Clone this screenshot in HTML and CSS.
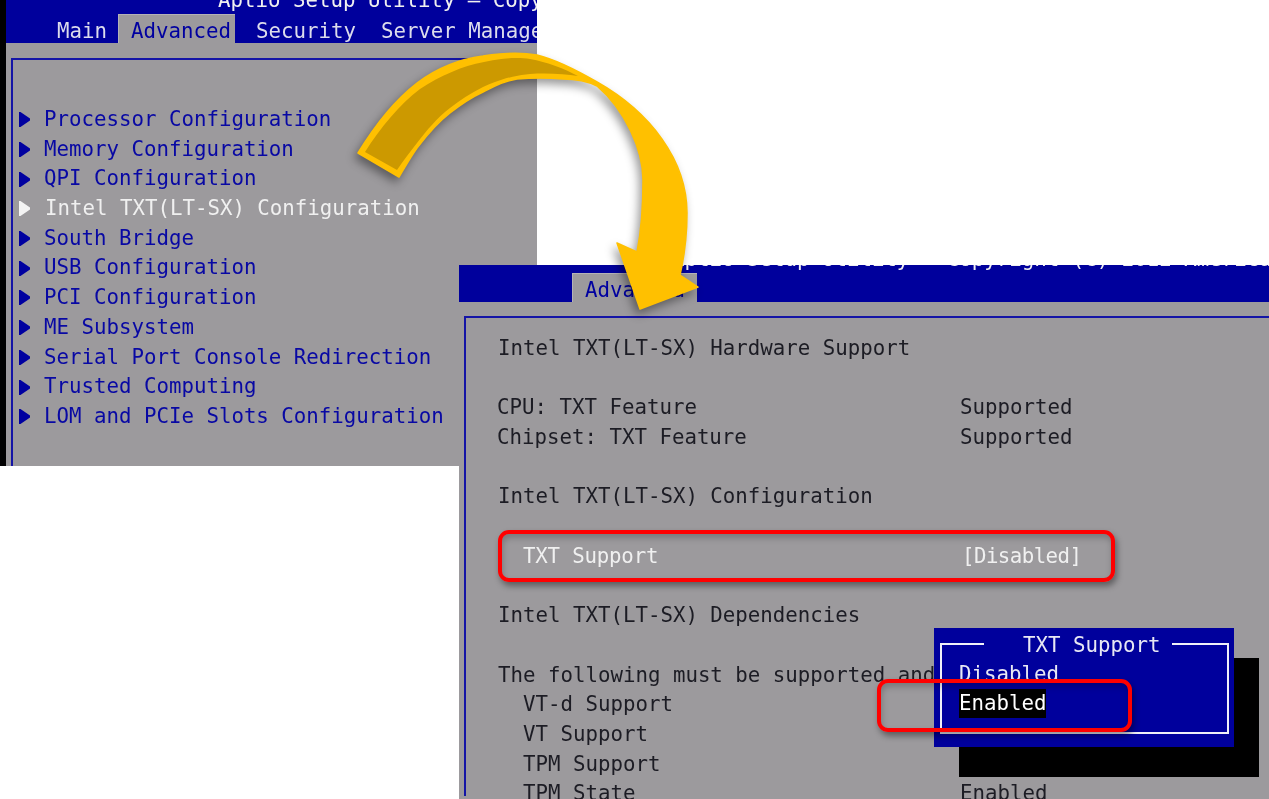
FILE: index.html
```html
<!DOCTYPE html>
<html lang="en">
<head>
<meta charset="utf-8">
<title>Intel TXT BIOS setup</title>
<link rel="stylesheet" href="styles.css">
</head>
<body>
<main class="canvas">
  <section class="shot shot-left">
    <header class="bar bar-left">
      <div class="title title-left">Aptio Setup Utility – Copyright (C) 2012 American</div>
      <nav class="tabs tabs-left">
        <span class="tab">Main</span>
        <span class="tab tab-active">Advanced</span>
        <span class="tab">Security</span>
        <span class="tab">Server Management</span>
      </nav>
    </header>
    <div class="frame frame-left">
      <div class="item"><svg class="tri" viewBox="0 0 11 15"><path d="M0 0H1.5L11 6.5V8.5L1.5 15H0Z"/></svg><span>Processor Configuration</span></div>
      <div class="item"><svg class="tri" viewBox="0 0 11 15"><path d="M0 0H1.5L11 6.5V8.5L1.5 15H0Z"/></svg><span>Memory Configuration</span></div>
      <div class="item"><svg class="tri" viewBox="0 0 11 15"><path d="M0 0H1.5L11 6.5V8.5L1.5 15H0Z"/></svg><span>QPI Configuration</span></div>
      <div class="item item-selected"><svg class="tri" viewBox="0 0 11 15"><path d="M0 0H1.5L11 6.5V8.5L1.5 15H0Z"/></svg><span>Intel TXT(LT-SX) Configuration</span></div>
      <div class="item"><svg class="tri" viewBox="0 0 11 15"><path d="M0 0H1.5L11 6.5V8.5L1.5 15H0Z"/></svg><span>South Bridge</span></div>
      <div class="item"><svg class="tri" viewBox="0 0 11 15"><path d="M0 0H1.5L11 6.5V8.5L1.5 15H0Z"/></svg><span>USB Configuration</span></div>
      <div class="item"><svg class="tri" viewBox="0 0 11 15"><path d="M0 0H1.5L11 6.5V8.5L1.5 15H0Z"/></svg><span>PCI Configuration</span></div>
      <div class="item"><svg class="tri" viewBox="0 0 11 15"><path d="M0 0H1.5L11 6.5V8.5L1.5 15H0Z"/></svg><span>ME Subsystem</span></div>
      <div class="item"><svg class="tri" viewBox="0 0 11 15"><path d="M0 0H1.5L11 6.5V8.5L1.5 15H0Z"/></svg><span>Serial Port Console Redirection</span></div>
      <div class="item"><svg class="tri" viewBox="0 0 11 15"><path d="M0 0H1.5L11 6.5V8.5L1.5 15H0Z"/></svg><span>Trusted Computing</span></div>
      <div class="item"><svg class="tri" viewBox="0 0 11 15"><path d="M0 0H1.5L11 6.5V8.5L1.5 15H0Z"/></svg><span>LOM and PCIe Slots Configuration</span></div>
    </div>
  </section>

  <section class="shot shot-right">
    <header class="bar bar-right">
      <div class="title title-right">Aptio Setup Utility – Copyright (C) 2012 American Megatrends</div>
      <nav class="tabs tabs-right">
        <span class="tab tab-active tab-active-right">Advanced</span>
      </nav>
    </header>
    <div class="frame frame-right">
      <div class="row">Intel TXT(LT-SX) Hardware Support</div>
      <div class="row"></div>
      <div class="row row-tight"><span class="label">CPU: TXT Feature</span><span>Supported</span></div>
      <div class="row row-tight"><span class="label">Chipset: TXT Feature</span><span>Supported</span></div>
      <div class="row"></div>
      <div class="row">Intel TXT(LT-SX) Configuration</div>
      <div class="row"></div>
      <div class="row row-white"><span class="label label-indent">TXT Support</span><span class="value-option">[Disabled]</span></div>
      <div class="row"></div>
      <div class="row">Intel TXT(LT-SX) Dependencies</div>
      <div class="row"></div>
      <div class="row">The following must be supported and</div>
      <div class="row"><span class="label label-indent">VT-d Support</span></div>
      <div class="row"><span class="label label-indent">VT Support</span></div>
      <div class="row"><span class="label label-indent">TPM Support</span></div>
      <div class="row"><span class="label label-indent">TPM State</span><span>Enabled</span></div>
    </div>
  </section>

  <aside class="popup">
    <div class="popup-head">
      <span class="popup-line popup-line-left"></span>
      <span class="popup-title">TXT Support</span>
      <span class="popup-line popup-line-right"></span>
    </div>
    <div class="popup-body">
      <div class="popup-option">Disabled</div>
      <div class="popup-option popup-option-on"><span class="popup-mark">Enabled</span></div>
    </div>
  </aside>

  <div class="callout callout-wide"></div>
  <div class="callout callout-small"></div>

  <svg class="arrow" viewBox="0 0 1269 799" aria-hidden="true">
    <path class="arrow-body" d="M358 153C375 125 395 100 417 83C437 68 460 59 483 56C502 53 520 52 537 55C557 60 578 71 597 82C650 112 687 160 687 213C687 235 684 258 680 275L698 287L640 309L617 243L637 252C641 232 643 205 643 180C643 150 625 110 597 86C585 80 575 79 563 79C550 78 530 78 517 79C504 81 495 86 483 92C470 98 460 105 450 113C437 123 427 135 417 148C410 158 405 167 399 177Z"/>
    <path class="arrow-dark" d="M365 152C380 128 400 104 420 89C440 76 462 66 484 62C502 58 518 57 530 59C547 62 565 69 578 76C565 74 548 73 530 74C515 75 498 80 483 87C471 93 460 100 450 108C437 118 427 130 417 143C410 152 403 161 397 170Z"/>
  </svg>
</main>
</body>
</html>
```
FILE: styles.css
```css
* { box-sizing: border-box; }
html, body { margin: 0; padding: 0; background: #fff; }

.canvas {
  position: relative;
  width: 1269px;
  height: 799px;
  overflow: hidden;
  background: #fff;
  font-family: "DejaVu Sans Mono", "Liberation Mono", monospace;
  font-size: 20.76px;
  line-height: 29.7px;
  white-space: nowrap;
}

.shot {
  position: absolute;
  overflow: hidden;
  background: #9c9a9d;
  filter: blur(0.4px);
}
.shot-left {
  left: 0;
  top: 0;
  width: 537px;
  height: 466px;
  border-left: 6px solid #000;
}
.shot-right {
  left: 459px;
  top: 265px;
  width: 810px;
  height: 534px;
  color: #1c1c24;
}

.bar { background: #00009c; color: #dcdcec; overflow: hidden; }
.bar-left { height: 57px; margin-top: -14px; }
.bar-right { height: 37px; }
.title { height: 29.7px; color: #f0f0f0; }
.title-left { padding-left: 212px; }
.title-right { margin-top: -20px; padding-left: 213px; }

.tabs { display: flex; margin-top: -1.7px; }
.tabs-left { padding-left: 51px; }
.tabs-right { padding-left: 113px; }

.tab { padding-top: 3px; margin-right: 25px; height: 30px; }
.tabs-left .tab:first-child { margin-right: 24px; }
.tab-active {
  color: #0000a0;
  background: #9c9a9d;
  padding: 3px 4px 0 13px;
  margin: 0 21px 0 -13px;
  box-shadow: inset 1px 1px 0 #b4b2b6;
}
.tab-active-right { margin: 0; padding-right: 12px; }

.frame { border-top: 2px solid #1414a6; border-left: 2px solid #1414a6; }
.frame-left {
  margin: 15px 0 0 5px;
  padding: 45px 0 0 6px;
  height: 410px;
  color: #0808a4;
}
.frame-right {
  margin: 14px 0 0 5px;
  padding: 16px 0 0 32px;
  height: 480px;
}

.item { display: flex; align-items: center; height: 29.7px; }
.tri { width: 11px; height: 15px; margin-right: 14px; flex: none; fill: #0000a0; }
.item-selected { color: #f0f0f0; }
.item-selected .tri { fill: #f4f4f4; }
.item-selected span { margin-left: 1px; }

.row { display: flex; height: 29.7px; }
.row-tight { margin-left: -1px; }
.row-white { color: #f0f0f0; letter-spacing: -0.2px; }
.label { width: 463px; flex: none; }
.label-indent { width: 437px; margin-left: 25px; }
.value-option { margin-left: 2px; letter-spacing: -0.55px; }

.popup {
  position: absolute;
  left: 934px;
  top: 628px;
  width: 300px;
  height: 119px;
  padding: 0 5px 0 6px;
  background: #00009c;
  color: #e8e8f4;
  box-shadow: 25px 30px 0 #000;
  filter: blur(0.3px);
}
.popup-head { display: flex; height: 32px; }
.popup-line { height: 17px; align-self: flex-end; border-top: 2px solid #f0f0f8; }
.popup-line-left { width: 44px; border-left: 2px solid #f0f0f8; }
.popup-line-right { flex: 1; border-right: 2px solid #f0f0f8; }
.popup-title { align-self: flex-end; margin: 0 12px -1px 39px; }
.popup-body {
  height: 74px;
  padding-left: 17px;
  border: 2px solid #f0f0f8;
  border-top: 0;
}
.popup-option-on { margin-top: -1px; }
.popup-mark { display: inline-block; background: #000; color: #fff; }

.callout {
  position: absolute;
  border: 4px solid #f00;
  border-radius: 11px;
  box-shadow: 2px 4px 6px rgba(0, 0, 0, 0.4), inset 1px 4px 6px rgba(0, 0, 0, 0.22);
}
.callout-wide { left: 498px; top: 530px; width: 617px; height: 52px; }
.callout-small { left: 877px; top: 679px; width: 255px; height: 53px; }

.arrow {
  position: absolute;
  left: 0;
  top: 0;
  width: 1269px;
  height: 799px;
  filter: drop-shadow(-3px 5px 5px rgba(0, 0, 0, 0.4));
}
.arrow-body { fill: #ffc000; stroke: #ffc000; stroke-width: 1.5px; stroke-linejoin: round; }
.arrow-dark { fill: #cc9900; }
```
